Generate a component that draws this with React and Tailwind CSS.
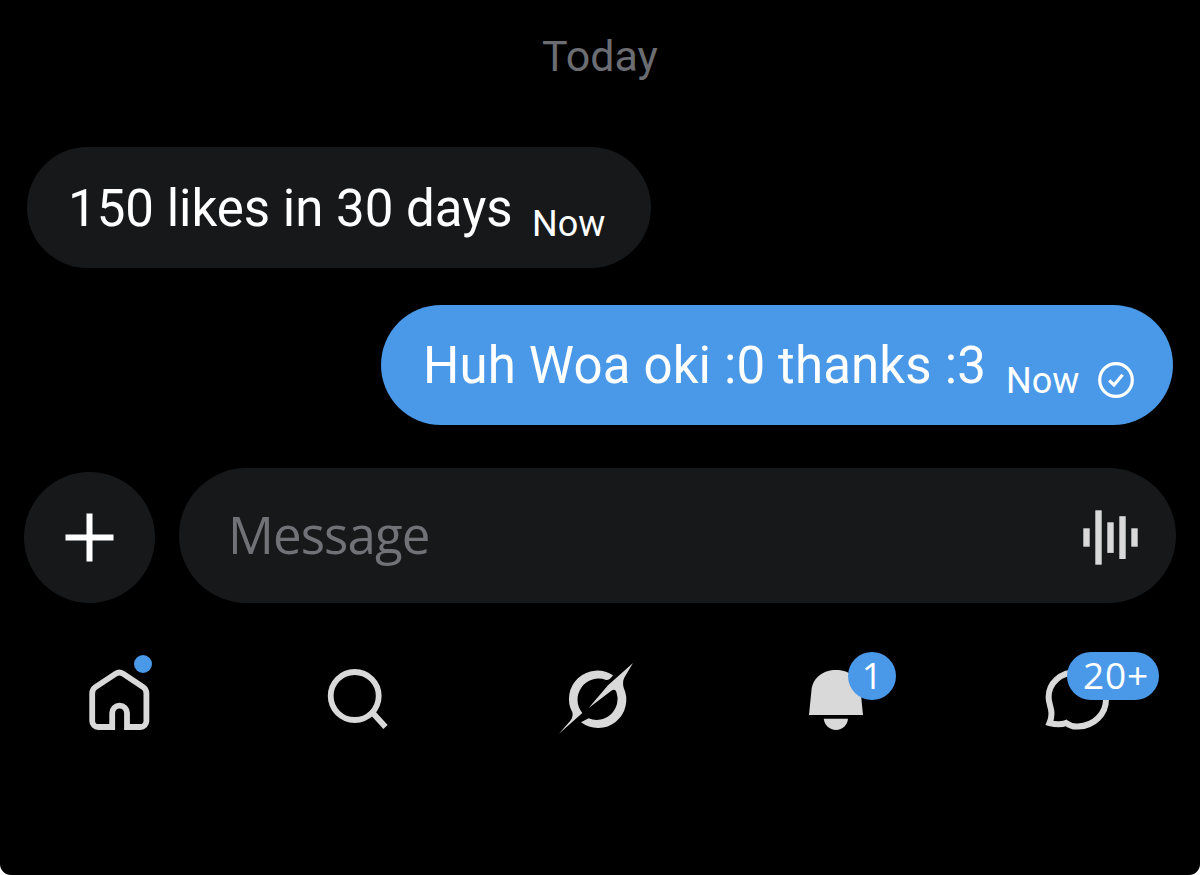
function SentIcon() {
  return (
    <svg viewBox="0 0 36 36" fill="none" stroke="currentColor" className="h-9 w-9 shrink-0">
      <circle cx="18" cy="18" r="16.3" strokeWidth="3.2" />
      <path d="M11.2 18.4 L16 23 L24.6 12.8" strokeWidth="3.2" />
    </svg>
  );
}

function VoiceIcon() {
  return (
    <svg viewBox="0 0 55 55" fill="currentColor" className="h-[55px] w-[55px]">
      <rect x="0.3" y="18.3" width="6.4" height="18.4" />
      <rect x="12.3" y="0.3" width="6.4" height="54.4" />
      <rect x="24.3" y="12.3" width="6.4" height="30.6" />
      <rect x="36.3" y="6.2" width="6.4" height="42.8" />
      <rect x="48.3" y="18.3" width="6.4" height="18.4" />
    </svg>
  );
}

function HomeIcon() {
  return (
    <svg viewBox="0 0 99 110" fill="none" stroke="currentColor" strokeWidth="5.8" className="h-[110px] w-[99px]">
      <path d="M42.2 87 H28.2 a6 6 0 0 1 -6 -6 V53.5 c0 -3 1 -5 3.2 -6.4 L45.8 33.6 q3.6 -2.2 7.2 0 L73.2 47.1 c2.2 1.4 3.2 3.4 3.2 6.4 V81 a6 6 0 0 1 -6 6 H57 V73 a7.4 7.4 0 0 0 -14.8 0 V87 Z" />
    </svg>
  );
}

function SearchIcon() {
  return (
    <svg viewBox="0 0 99 110" fill="none" stroke="currentColor" strokeWidth="5.8" className="h-[110px] w-[99px]">
      <circle cx="45.7" cy="56" r="24" />
      <path d="M62 71 L76.5 87" />
    </svg>
  );
}

function GrokIcon() {
  return (
    <svg viewBox="24 -30 297 330" fill="currentColor" className="h-[110px] w-[99px]">
      <path d="M57 251 L91 212 Q101 200 97 187 A85 85 0 0 1 219 76 Q210 91 198 90 A63 63 0 0 0 127 189 Z" />
      <path d="M279 39 L204 106 L146 174 L214 122 Q225 115 229 125 A63 63 0 0 1 146 205 L123 217 A85 85 0 0 0 251 113 Q246 96 254 81 Z" />
    </svg>
  );
}

function BellIcon() {
  return (
    <svg viewBox="0 0 99 110" fill="currentColor" className="h-[110px] w-[99px]">
      <path d="M22 75 L24.6 49 C26 37.5 36.5 30 49 30 C61.5 30 72 37.5 73.4 49 L76 75 Z" />
      <path d="M36.8 78.8 H61 C60.5 85.2 55.5 90 49 90 C42.5 90 37.3 85.2 36.8 78.8 Z" />
    </svg>
  );
}

function ChatIcon() {
  return (
    <svg viewBox="0 0 99 110" fill="none" stroke="currentColor" strokeWidth="6" className="h-[110px] w-[99px]">
      <path d="M40 83 C44 85.8 48 87 52 86.5 C68 86 80 74 80 59.5 C80 44 68 32 51.5 32 C34 32 22.6 43.5 22.6 57 C22.6 64 25.5 67 25.5 73.5 C25.5 77.5 25 79.5 23.5 83 C29 84.5 35 85 40 83 Z" />
    </svg>
  );
}

const badge =
  "absolute flex items-center justify-center rounded-full bg-[#4a99e9] text-white font-['Open_Sans',sans-serif]";

const tabs = [
  {
    name: "home",
    Icon: HomeIcon,
    extra: <span className="absolute left-[64px] top-[15px] h-[18px] w-[18px] rounded-full bg-[#4a99e9]" />,
  },
  { name: "search", Icon: SearchIcon },
  { name: "grok", Icon: GrokIcon },
  {
    name: "notifications",
    Icon: BellIcon,
    extra: <span className={`${badge} left-[61px] top-3 h-12 w-12 pb-px text-[36px] leading-none`}>1</span>,
  },
  {
    name: "messages",
    Icon: ChatIcon,
    extra: (
      <span className={`${badge} left-[41px] top-3 h-12 w-[92px] pb-[3px] pl-1.5 text-[37px] leading-none tracking-[0.8px]`}>
        20+
      </span>
    ),
  },
];

export default function App() {
  return (
    <div className="h-[875px] w-[1200px] bg-white">
      <div className="flex h-full flex-col overflow-hidden rounded-b-[11px] bg-black font-['Roboto',sans-serif] text-white">
        <div className="flex h-[147px] shrink-0 justify-center pt-[31px] text-[43px] leading-[50px] text-[#6b6d72]">
          <span>Today</span>
        </div>

        <div className="flex shrink-0 flex-col gap-[37px]">
          <div className="ml-[27px] flex h-[121px] w-[624px] rounded-full bg-[#16181a] pl-[41px] pt-8">
            <span className="w-[464px] whitespace-nowrap text-[51px] leading-[60px]">150 likes in 30 days</span>
            <span className="mt-[21px] text-[36px] leading-[48px]">Now</span>
          </div>
          <div className="ml-[381px] flex h-[120px] w-[792px] rounded-full bg-[#4a99e9] pl-[42px] pt-[31px]">
            <span className="w-[583px] whitespace-nowrap text-[51px] leading-[60px] tracking-[0.15px]">
              Huh Woa oki :0 thanks :3
            </span>
            <span className="mt-[21px] w-[92px] text-[36px] leading-[48px]">Now</span>
            <span className="mt-[26px]">
              <SentIcon />
            </span>
          </div>
        </div>

        <div className="mt-[43px] flex shrink-0 items-end gap-6 pl-6">
          <button className="flex h-[131px] w-[131px] items-center justify-center rounded-full bg-[#16181a]">
            <svg viewBox="0 0 49 49" stroke="currentColor" strokeWidth="6" className="h-[49px] w-[49px]">
              <path d="M24.5 0.5 V48.5 M0.5 24.5 H48.5" />
            </svg>
          </button>
          <div className="flex h-[135px] w-[997px] items-center justify-between rounded-full bg-[#16181a] pl-[49px] pr-[38px]">
            <span className="pb-[3px] font-['Open_Sans',sans-serif] text-[51px] leading-[60px] tracking-[-0.9px] text-[#707278]">
              Message
            </span>
            <span className="pt-1 text-[#d9d9d9]">
              <VoiceIcon />
            </span>
          </div>
        </div>

        <nav className="mt-[37px] flex shrink-0 text-[#d9d9d9]">
          {tabs.map(({ name, Icon, extra }) => (
            <div key={name} className="flex w-[239px] shrink-0 pl-[70px]">
              <div className="relative">
                <Icon />
                {extra}
              </div>
            </div>
          ))}
        </nav>
      </div>
    </div>
  );
}
